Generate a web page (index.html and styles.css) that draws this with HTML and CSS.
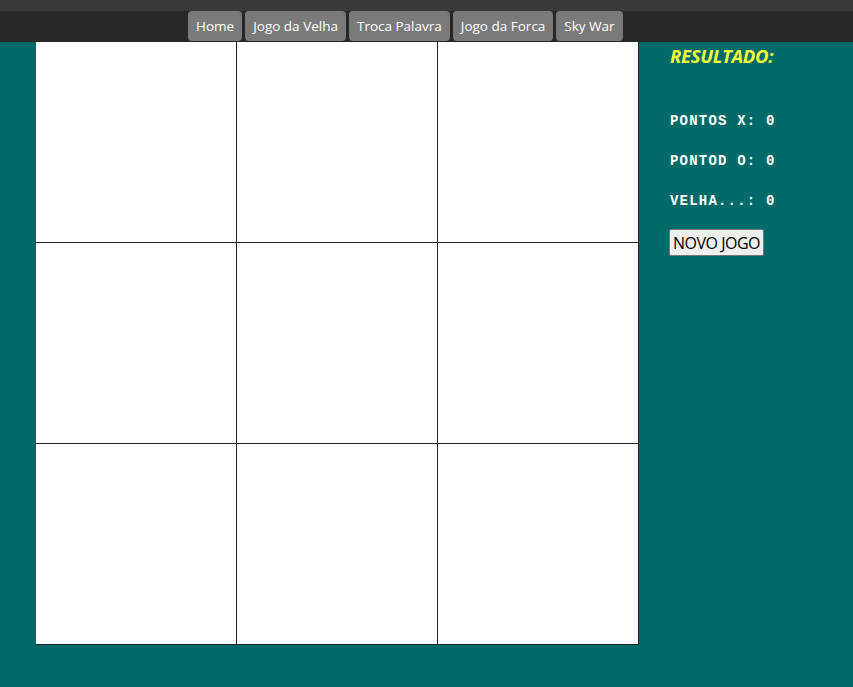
FILE: index.html
```html
<!DOCTYPE html>
<html lang="pt">
<head>
<meta charset="utf-8">
<link rel="stylesheet" href="styles.css">
</head>
<body>
<header class="topbar">
  <nav class="tabs">
    <a class="tab">Home</a>
    <a class="tab">Jogo da Velha</a>
    <a class="tab">Troca Palavra</a>
    <a class="tab">Jogo da Forca</a>
    <a class="tab">Sky War</a>
  </nav>
</header>
<main class="page">
  <div class="board">
    <div class="cell"></div><div class="cell"></div><div class="cell"></div>
    <div class="cell"></div><div class="cell"></div><div class="cell"></div>
    <div class="cell"></div><div class="cell"></div><div class="cell"></div>
  </div>
  <aside class="score">
    <h2 class="title">RESULTADO:</h2>
    <p class="line">PONTOS X: 0</p>
    <p class="line">PONTOD O: 0</p>
    <p class="line">VELHA...: 0</p>
    <button class="btn">NOVO JOGO</button>
  </aside>
</main>
</body>
</html>
```
FILE: styles.css
```css
html, body {
  margin: 0;
  padding: 0;
  background: #026a68;
}
body {
  font-family: "Open Sans", "Noto Sans", sans-serif;
}
.topbar {
  background: #282828;
  border-top: 11px solid #393939;
  height: 31px;
  box-sizing: content-box;
}
.tabs {
  display: flex;
  gap: 3px;
  padding-left: 188px;
  height: 31px;
}
.tab {
  display: flex;
  align-items: center;
  background: #7a7a7a;
  color: #ffffff;
  font-size: 13.5px;
  padding: 0 8px;
  border-radius: 4px;
  height: 30px;
}
.page {
  display: flex;
  padding-left: 36px;
}
.board {
  display: grid;
  grid-template-columns: repeat(3, 201px);
  grid-template-rows: repeat(3, 201px);
  background: #ffffff;
  width: 603px;
}
.cell {
  border-right: 1px solid #222;
  border-bottom: 1px solid #222;
  box-sizing: border-box;
}
.score {
  padding-left: 31px;
  display: flex;
  flex-direction: column;
  align-items: flex-start;
}
.title {
  margin: 1px 0 0 0;
  color: #f4ff3a;
  font-style: italic;
  font-weight: 700;
  font-size: 18.5px;
  letter-spacing: -0.3px;
  line-height: 26px;
}
.line {
  font-family: "Liberation Mono", "Courier New", monospace;
  font-weight: 700;
  font-size: 14px;
  letter-spacing: 1.2px;
  color: #ffffff;
  margin: 0;
  height: 40px;
  line-height: 16px;
}
.line:first-of-type {
  margin-top: 44px;
}
.btn {
  font-family: "Open Sans", sans-serif;
  font-size: 16px;
  letter-spacing: -0.5px;
  background: #efefef;
  border: 1px solid #767676;
  border-radius: 2px;
  color: #000;
  padding: 0 3px;
  height: 27px;
  margin-top: -4px;
  margin-left: -1px;
}
```
